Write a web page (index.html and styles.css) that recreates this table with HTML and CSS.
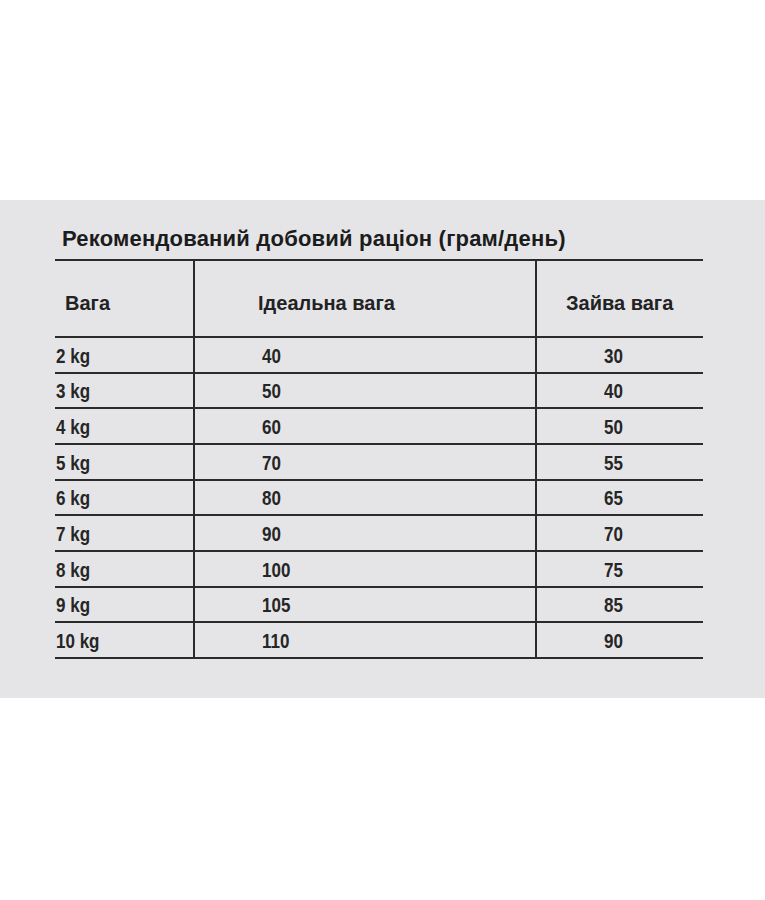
FILE: index.html
```html
<!DOCTYPE html>
<html lang="uk">
<head>
<meta charset="utf-8">
<title>Рекомендований добовий раціон</title>
<link rel="stylesheet" href="styles.css">
</head>
<body>
<div class="panel">
  <h1 class="title">Рекомендований добовий раціон (грам/день)</h1>
  <div class="grid">
    <div class="cell head c1">Вага</div>
    <div class="cell head c2">Ідеальна вага</div>
    <div class="cell head c3">Зайва вага</div>

    <div class="cell row c1"><span class="num">2 kg</span></div><div class="cell row c2"><span class="num">40</span></div><div class="cell row c3"><span class="num">30</span></div>
    <div class="cell row c1"><span class="num">3 kg</span></div><div class="cell row c2"><span class="num">50</span></div><div class="cell row c3"><span class="num">40</span></div>
    <div class="cell row c1"><span class="num">4 kg</span></div><div class="cell row c2"><span class="num">60</span></div><div class="cell row c3"><span class="num">50</span></div>
    <div class="cell row c1"><span class="num">5 kg</span></div><div class="cell row c2"><span class="num">70</span></div><div class="cell row c3"><span class="num">55</span></div>
    <div class="cell row c1"><span class="num">6 kg</span></div><div class="cell row c2"><span class="num">80</span></div><div class="cell row c3"><span class="num">65</span></div>
    <div class="cell row c1"><span class="num">7 kg</span></div><div class="cell row c2"><span class="num">90</span></div><div class="cell row c3"><span class="num">70</span></div>
    <div class="cell row c1"><span class="num">8 kg</span></div><div class="cell row c2"><span class="num">100</span></div><div class="cell row c3"><span class="num">75</span></div>
    <div class="cell row c1"><span class="num">9 kg</span></div><div class="cell row c2"><span class="num">105</span></div><div class="cell row c3"><span class="num">85</span></div>
    <div class="cell row c1"><span class="num">10 kg</span></div><div class="cell row c2"><span class="num">110</span></div><div class="cell row c3"><span class="num">90</span></div>
  </div>
</div>
</body>
</html>
```
FILE: styles.css
```css
html, body {
  margin: 0;
  padding: 0;
  background: #ffffff;
}
body {
  width: 765px;
  height: 900px;
  font-family: "Liberation Sans", Arial, sans-serif;
  color: #262626;
}
.panel {
  margin-top: 200px;
  height: 498px;
  background: #e5e5e8;
  padding-top: 27px;
  box-sizing: border-box;
}
.title {
  margin: 0 0 0 62px;
  font-size: 22px;
  line-height: 24px;
  letter-spacing: 0.2px;
  font-weight: 700;
  color: #1c1c1c;
}
.grid {
  margin: 8px 0 0 55px;
  width: 648px;
  display: grid;
  grid-template-columns: 140px 342px 166px;
  border-top: 2px solid #2b2b2b;
}
.cell {
  box-sizing: border-box;
  border-bottom: 2px solid #2b2b2b;
  display: flex;
  align-items: center;
}
.c1, .c2 {
  border-right: 2px solid #2b2b2b;
}
.head {
  height: 77px;
  font-size: 20px;
  font-weight: 700;
  padding-top: 10px;
  color: #222;
}
.head.c1 { padding-left: 10px; }
.head.c2 { padding-left: 63px; }
.head.c3 { padding-left: 29px; }
.row {
  height: 35.67px;
  font-size: 21px;
  font-weight: 700;
  padding-top: 2px;
  color: #262626;
}
.num {
  display: inline-block;
  transform: scaleX(0.81);
  transform-origin: left center;
  white-space: nowrap;
}
.row.c1 { padding-left: 1px; }
.row.c2 { padding-left: 67px; }
.row.c3 { padding-left: 67px; }
```
